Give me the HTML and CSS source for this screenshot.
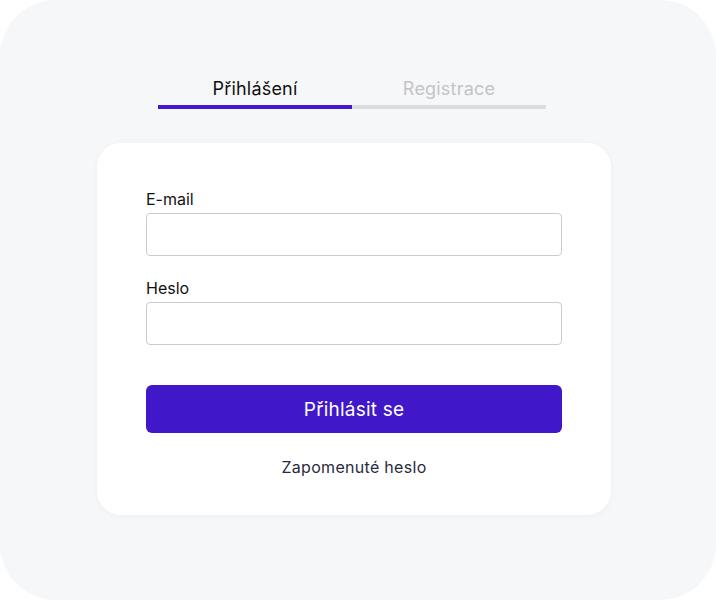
FILE: index.html
```html
<!DOCTYPE html>
<html lang="cs">
<head>
<meta charset="utf-8">
<title>Přihlášení</title>
<link rel="stylesheet" href="styles.css">
</head>
<body>
<div class="frame">
  <nav class="tabs">
    <a class="tab active" href="#">Přihlášení</a>
    <a class="tab" href="#">Registrace</a>
  </nav>
  <form class="card">
    <label class="field">
      <span class="label">E-mail</span>
      <input class="input" type="email">
    </label>
    <label class="field">
      <span class="label">Heslo</span>
      <input class="input" type="password">
    </label>
    <button class="btn" type="button">Přihlásit se</button>
    <a class="forgot" href="#">Zapomenuté heslo</a>
  </form>
</div>
</body>
</html>
```
FILE: styles.css
```css
* { box-sizing: border-box; }
html, body { margin: 0; padding: 0; background: #ffffff; }
body { font-family: Inter, "Noto Sans", sans-serif; }
.frame {
  width: 716px;
  height: 600px;
  background: #f6f7f9;
  border-radius: 56px;
  padding-top: 75px;
  overflow: hidden;
}
.tabs {
  display: flex;
  width: 388px;
  margin-left: 158px;
}
.tab {
  flex: 1;
  text-align: center;
  font-size: 18px;
  line-height: 27px;
  letter-spacing: 0.2px;
  padding-bottom: 3px;
  text-decoration: none;
  color: #c3c4c8;
  border-bottom: 4px solid #dcdde0;
}
.tab.active {
  color: #111111;
  border-bottom-color: #4318d1;
}
.card {
  margin: 34px 0 0 97px;
  width: 514px;
  background: #ffffff;
  border-radius: 24px;
  padding: 44px 49px 36px;
  display: flex;
  flex-direction: column;
  box-shadow: 0 1px 6px rgba(20, 20, 40, 0.04);
}
.field {
  display: flex;
  flex-direction: column;
  margin-bottom: 20px;
}
.label {
  font-size: 16px;
  line-height: 24px;
  color: #111111;
  margin-bottom: 2px;
}
.input {
  height: 43px;
  border: 1px solid #cbcbcf;
  border-radius: 4px;
  background: #ffffff;
  font: inherit;
}
.btn {
  margin-top: 20px;
  height: 48px;
  border: 0;
  border-radius: 6px;
  background: #4018c9;
  color: #ffffff;
  font-family: inherit;
  font-size: 19px;
  letter-spacing: 0.2px;
}
.forgot {
  margin-top: 22px;
  text-align: center;
  font-size: 16px;
  line-height: 24px;
  letter-spacing: 0.3px;
  color: #2a2b3c;
  text-decoration: none;
}
```
